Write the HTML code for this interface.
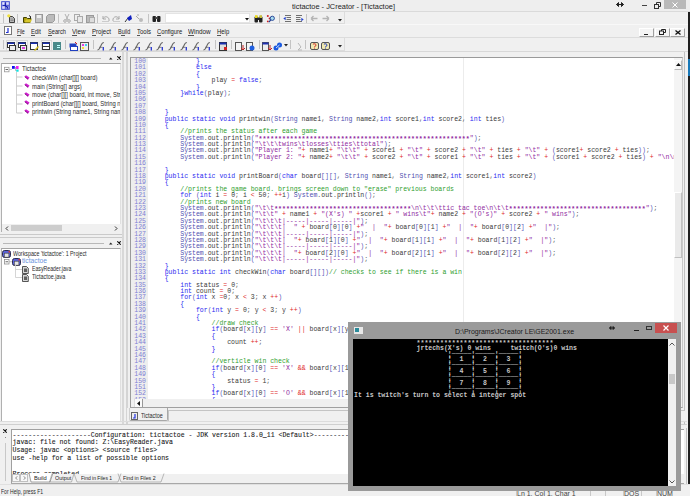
<!DOCTYPE html><html><head><meta charset="utf-8"><style>
*{margin:0;padding:0;box-sizing:border-box}
html,body{width:690px;height:496px;overflow:hidden;background:#f0f0f0}
body{position:relative;font-family:"Liberation Sans",sans-serif}
div,span,svg{position:absolute}
i{font-style:normal}
.ui{font-size:7.2px;color:#1a1a1a;white-space:nowrap;line-height:8px}
.code{font-family:"Liberation Mono",monospace;font-size:6.53px;line-height:6.386px;white-space:pre;color:#3a3a3a}
.sr{position:relative;top:1.3px;font-weight:bold}
.kw{color:#2a2af0}.cl{color:#5050b0}.st{color:#902aa0}.cm{color:#30a030}.op{color:#e02828}.br{color:#5858b8}.pu{color:#606060}
.ln{font-family:"Liberation Mono",monospace;font-size:6.53px;line-height:6.386px;white-space:pre;color:#7e7ed4;text-align:right}
.sep{width:1px;background:#c8c8c8}
.mono{font-family:"Liberation Mono",monospace;white-space:pre}
</style></head><body><div style="left:0px;top:0px;width:690px;height:11px;background:#eeeeee"></div><svg style="left:1px;top:1px" width="9" height="9" viewBox="0 0 9 9"><rect x="0" y="0" width="9" height="9" rx="0.8" fill="#5c66d4"/><rect x="1.2" y="1.2" width="2.6" height="2.6" fill="#e6e6ff"/><rect x="5.2" y="1.2" width="2.6" height="2.6" fill="#dcdcfa"/><rect x="1.2" y="5.2" width="2.6" height="2.6" fill="#dcdcfa"/><rect x="5.6" y="5.6" width="2" height="2" fill="#c8c8f0"/><path d="M4.3 1.5v2.8q0 1.2 1.2 1.2q1.2 0 1.3 2.2" stroke="#1018a8" stroke-width="1.1" fill="none"/><path d="M2 4.5h2.5" stroke="#1018a8" stroke-width="0.8"/></svg><div style="left:292.00px;top:2.52px;font-size:7.3px;line-height:7.3px;white-space:nowrap;color:#1e1e1e;transform:scaleX(1.0143);transform-origin:0 0;">tictactoe - JCreator - [Tictactoe]</div><svg style="left:616px;top:2px" width="8" height="5"><path d="M0.5 2.5h7M0.5 2.5l2-2v4zM7.5 2.5l-2-2v4z" stroke="#222" stroke-width="1" fill="#222"/></svg><div style="left:642px;top:5px;width:5px;height:1px;background:#444"></div><svg style="left:654px;top:2px" width="7" height="7"><path d="M2.5 2.5v-2h4v4h-2" stroke="#333" fill="none"/><rect x="0.5" y="2.5" width="4" height="4" fill="#eee" stroke="#333"/></svg><div style="left:664px;top:0px;width:22px;height:9px;background:#b9b9b9"></div><svg style="left:672px;top:2px" width="6" height="6"><path d="M0.5 0.5L5.5 5.5M5.5 0.5L0.5 5.5" stroke="#fff" stroke-width="1"/></svg><div style="left:0px;top:11px;width:690px;height:1px;background:#dadada"></div><div style="left:0px;top:12px;width:345px;height:12px;background:#f0f0f0"></div><div style="left:0px;top:23px;width:345px;height:1px;background:#dcdcdc"></div><div style="left:344px;top:12px;width:1px;height:12px;background:#dcdcdc"></div><div style="left:0px;top:24px;width:690px;height:1px;background:#f8f8f8"></div><div style="left:0px;top:37px;width:690px;height:1px;background:#dcdcdc"></div><div style="left:0px;top:50px;width:345px;height:1px;background:#dcdcdc"></div><div style="left:344px;top:38px;width:1px;height:12px;background:#dcdcdc"></div><div style="left:0px;top:51px;width:690px;height:1px;background:#d8d8d8"></div><div style="left:3px;top:14px;width:1px;height:9px;background:#c4c4c4"></div><div style="left:17px;top:14px;width:1px;height:9px;background:#c4c4c4"></div><div style="left:58px;top:14px;width:1px;height:9px;background:#c4c4c4"></div><div style="left:97px;top:14px;width:1px;height:9px;background:#c4c4c4"></div><div style="left:148px;top:14px;width:1px;height:9px;background:#c4c4c4"></div><div style="left:279px;top:14px;width:1px;height:9px;background:#c4c4c4"></div><div style="left:306px;top:14px;width:1px;height:9px;background:#c4c4c4"></div><div style="left:3px;top:40px;width:1px;height:9px;background:#c4c4c4"></div><div style="left:65px;top:40px;width:1px;height:9px;background:#c4c4c4"></div><div style="left:93px;top:40px;width:1px;height:9px;background:#c4c4c4"></div><div style="left:215px;top:40px;width:1px;height:9px;background:#c4c4c4"></div><div style="left:231px;top:40px;width:1px;height:9px;background:#c4c4c4"></div><div style="left:259px;top:40px;width:1px;height:9px;background:#c4c4c4"></div><div style="left:290px;top:40px;width:1px;height:9px;background:#c4c4c4"></div><div style="left:305px;top:40px;width:1px;height:9px;background:#c4c4c4"></div><div style="left:688px;top:12px;width:2px;height:474px;background:#1e1e1e"></div><div style="left:688px;top:59px;width:2px;height:17px;background:#1878b8"></div><svg style="left:4px;top:26px" width="8" height="9"><rect x="0.5" y="0.5" width="7" height="8" fill="#fff" stroke="#777"/><path d="M4 2v4.5h-2" stroke="#2030d0" stroke-width="1.2" fill="none"/></svg><div style="left:16.50px;top:27.67px;font-size:7.0px;line-height:7.0px;white-space:nowrap;color:#1a1a1a;transform:scaleX(0.6921);transform-origin:0 0;">File</div><div style="left:31.00px;top:27.67px;font-size:7.0px;line-height:7.0px;white-space:nowrap;color:#1a1a1a;transform:scaleX(0.8199);transform-origin:0 0;">Edit</div><div style="left:47.80px;top:27.67px;font-size:7.0px;line-height:7.0px;white-space:nowrap;color:#1a1a1a;transform:scaleX(0.8067);transform-origin:0 0;">Search</div><div style="left:72.20px;top:27.67px;font-size:7.0px;line-height:7.0px;white-space:nowrap;color:#1a1a1a;transform:scaleX(0.8904);transform-origin:0 0;">View</div><div style="left:91.80px;top:27.67px;font-size:7.0px;line-height:7.0px;white-space:nowrap;color:#1a1a1a;transform:scaleX(0.8728);transform-origin:0 0;">Project</div><div style="left:117.60px;top:27.67px;font-size:7.0px;line-height:7.0px;white-space:nowrap;color:#1a1a1a;transform:scaleX(0.7833);transform-origin:0 0;">Build</div><div style="left:136.70px;top:27.67px;font-size:7.0px;line-height:7.0px;white-space:nowrap;color:#1a1a1a;transform:scaleX(0.8565);transform-origin:0 0;">Tools</div><div style="left:156.70px;top:27.67px;font-size:7.0px;line-height:7.0px;white-space:nowrap;color:#1a1a1a;transform:scaleX(0.8337);transform-origin:0 0;">Configure</div><div style="left:188.40px;top:27.67px;font-size:7.0px;line-height:7.0px;white-space:nowrap;color:#1a1a1a;transform:scaleX(0.9069);transform-origin:0 0;">Window</div><div style="left:216.70px;top:27.67px;font-size:7.0px;line-height:7.0px;white-space:nowrap;color:#1a1a1a;transform:scaleX(0.8481);transform-origin:0 0;">Help</div><div style="left:16.5px;top:34.6px;width:4.0px;height:0.8px;background:#555"></div><div style="left:31px;top:34.6px;width:4px;height:0.8px;background:#555"></div><div style="left:47.8px;top:34.6px;width:4.0px;height:0.8px;background:#555"></div><div style="left:72.2px;top:34.6px;width:4.799999999999997px;height:0.8px;background:#555"></div><div style="left:91.8px;top:34.6px;width:4.0px;height:0.8px;background:#555"></div><div style="left:121px;top:34.6px;width:3.5px;height:0.8px;background:#555"></div><div style="left:136.7px;top:34.6px;width:3.8000000000000114px;height:0.8px;background:#555"></div><div style="left:156.7px;top:34.6px;width:4.0px;height:0.8px;background:#555"></div><div style="left:188.4px;top:34.6px;width:6.099999999999994px;height:0.8px;background:#555"></div><div style="left:216.7px;top:34.6px;width:4.0px;height:0.8px;background:#555"></div><div style="left:639px;top:28px;width:15px;height:9px;background:#f4f4f4;border-right:1px solid #a0a0a0;border-bottom:1px solid #a0a0a0;border-left:1px solid #fff;border-top:1px solid #fff"></div><div style="left:655px;top:28px;width:15px;height:9px;background:#f4f4f4;border-right:1px solid #a0a0a0;border-bottom:1px solid #a0a0a0;border-left:1px solid #fff;border-top:1px solid #fff"></div><div style="left:670px;top:28px;width:15px;height:9px;background:#f4f4f4;border-right:1px solid #a0a0a0;border-bottom:1px solid #a0a0a0;border-left:1px solid #fff;border-top:1px solid #fff"></div><div style="left:644px;top:34px;width:4px;height:1px;background:#222"></div><svg style="left:659px;top:29px" width="7" height="6"><path d="M2.5 2v-1.5h4v3h-2" stroke="#222" fill="none"/><rect x="0.5" y="2" width="4" height="3.5" fill="none" stroke="#222"/></svg><svg style="left:675px;top:30px" width="6" height="5"><path d="M0.5 0.5L5.5 4.5M5.5 0.5L0.5 4.5" stroke="#111" stroke-width="1.3"/></svg><svg style="left:7px;top:14px" width="9" height="9" viewBox="0 0 9 9"><path d="M2.5 2.5h3l2 2v4h-5z" fill="#b8b8b8" stroke="#404040"/><path d="M3.5 5h3M3.5 6.5h3" stroke="#707070" stroke-width="0.6"/><circle cx="1.8" cy="1.8" r="1.6" fill="#f0e040"/></svg><svg style="left:23px;top:14px" width="9" height="9" viewBox="0 0 9 9"><path d="M0.5 3.5h3l1 1h3.5l-1 4h-6.5z" fill="#b0a010" stroke="#404000"/><path d="M1.5 8.5l1.5-3h6l-1.5 3z" fill="#d8c830"/><path d="M6 1.5l2 1.5-1 1" stroke="#222" fill="none"/></svg><svg style="left:35px;top:14px" width="9" height="9" viewBox="0 0 9 9"><rect x="0.5" y="0.5" width="7" height="8" fill="#c4c4c4" stroke="#999"/><rect x="2" y="1" width="4" height="3" fill="#eee"/></svg><svg style="left:46px;top:14px" width="9" height="9" viewBox="0 0 9 9"><path d="M2.5 0.5h6v6l-2 2h-6v-6z" fill="#bbb" stroke="#999"/></svg><svg style="left:63px;top:14px" width="9" height="9" viewBox="0 0 9 9"><path d="M2 0l3 6M6 0l-3 6" stroke="#b0b0b0"/><circle cx="2" cy="7" r="1.3" fill="none" stroke="#aaa"/><circle cx="6" cy="7" r="1.3" fill="none" stroke="#aaa"/></svg><svg style="left:74px;top:14px" width="9" height="9" viewBox="0 0 9 9"><rect x="0.5" y="0.5" width="5" height="6" fill="#eee" stroke="#aaa"/><rect x="3.5" y="2.5" width="5" height="6" fill="#e8e8e8" stroke="#aaa"/></svg><svg style="left:86px;top:14px" width="9" height="9" viewBox="0 0 9 9"><rect x="0.5" y="1.5" width="7" height="7" fill="#bbb" stroke="#999"/><rect x="3.5" y="3.5" width="5" height="5" fill="#ddd" stroke="#aaa"/></svg><svg style="left:101px;top:14px" width="9" height="9" viewBox="0 0 9 9"><path d="M2 2v3h3M2 5c1-3 5-3 6 0v2" fill="none" stroke="#aaa"/><rect x="1" y="7" width="7" height="1" fill="#ccc"/></svg><svg style="left:112px;top:14px" width="9" height="9" viewBox="0 0 9 9"><path d="M7 2v3h-3M7 5c-1-3-5-3-6 0v2" fill="none" stroke="#aaa"/><rect x="1" y="7" width="7" height="1" fill="#ccc"/></svg><svg style="left:124px;top:14px" width="9" height="9" viewBox="0 0 9 9"><path d="M1 8l3-4" stroke="#333"/><path d="M3 4l4-3 1 4-3 2z" fill="#1020c0"/></svg><svg style="left:135px;top:14px" width="9" height="9" viewBox="0 0 9 9"><path d="M1 2l3 3" stroke="#aaa"/><circle cx="6" cy="6" r="2" fill="#bbb"/><path d="M2 1h2" stroke="#aaa"/></svg><svg style="left:152px;top:14px" width="9" height="9" viewBox="0 0 9 9"><rect x="0.5" y="2" width="3.5" height="6" rx="1" fill="#222"/><rect x="5" y="2" width="3.5" height="6" rx="1" fill="#222"/><rect x="3" y="3" width="3" height="2" fill="#444"/></svg><div style="left:165px;top:13px;width:85px;height:10px;background:#fff;border:1px solid #e4e4e4"></div><svg style="left:245px;top:17.5px" width="4" height="3"><path d="M0 0h4l-2 2.5z" fill="#111"/></svg><svg style="left:254px;top:14px" width="9" height="9" viewBox="0 0 9 9"><rect x="0.5" y="2.5" width="3.5" height="6" rx="1" fill="#202020"/><rect x="5" y="2.5" width="3.5" height="6" rx="1" fill="#202020"/><rect x="3" y="3.5" width="3" height="2.5" fill="#202020"/><rect x="1" y="1.2" width="2.6" height="2.8" fill="#e8d820"/><rect x="5.4" y="1.2" width="2.6" height="2.8" fill="#c8c040"/></svg><svg style="left:266px;top:14px" width="10" height="9" viewBox="0 0 10 9"><circle cx="1.8" cy="2" r="1" fill="#d02020"/><circle cx="3.6" cy="4.6" r="1" fill="#d02020"/><circle cx="1.8" cy="7.4" r="0.9" fill="#d02020"/><circle cx="6.3" cy="4.3" r="2.1" fill="#a8dcf0" stroke="#1a3a90" stroke-width="0.9"/><path d="M4.8 5.8l-2 2.4" stroke="#1a3a90" stroke-width="1.1"/></svg><svg style="left:283px;top:14px" width="9" height="9" viewBox="0 0 9 9"><path d="M2 1.5h6M3.5 3.5h4.5M3.5 5.5h4.5M2 7.5h6" stroke="#707070" stroke-width="1"/><path d="M0.3 4.5l2.4-1.8v3.6z" fill="#2040d0"/></svg><svg style="left:295px;top:14px" width="9" height="9" viewBox="0 0 9 9"><path d="M1 1.5h6M1 3.5h4.5M1 5.5h4.5M1 7.5h6" stroke="#707070" stroke-width="1"/><path d="M8.7 5.5l-2.4-1.8v3.6z" fill="#2040d0"/></svg><svg style="left:310px;top:14px" width="9" height="9" viewBox="0 0 9 9"><path d="M1 4.5h6.5M1 4.5l2.5-2.5M1 4.5l2.5 2.5" stroke="#b4b4b4" stroke-width="1.3" fill="none"/></svg><svg style="left:321px;top:14px" width="9" height="9" viewBox="0 0 9 9"><path d="M8 4.5h-6.5M8 4.5l-2.5-2.5M8 4.5l-2.5 2.5" stroke="#b4b4b4" stroke-width="1.3" fill="none"/></svg><svg style="left:338px;top:19px" width="4" height="3"><path d="M0 0h4l-2 2.5z" fill="#222"/></svg><div style="left:5.5px;top:39.5px;width:11px;height:11px;background:#f6f6f6;border:1px solid #d8d8d8"></div><div style="left:17px;top:39.5px;width:11px;height:11px;background:#f6f6f6;border:1px solid #d8d8d8"></div><svg style="left:7px;top:42px" width="10" height="9" viewBox="0 0 10 9"><rect x="0.5" y="0.5" width="7" height="5" fill="#fff" stroke="#333"/><rect x="0.5" y="0.5" width="7" height="1.5" fill="#1a30b0"/><rect x="2.5" y="3.5" width="6" height="5" fill="#eee" stroke="#333"/></svg><svg style="left:18px;top:42px" width="10" height="9" viewBox="0 0 10 9"><rect x="0.5" y="0.5" width="7" height="5" fill="#fff" stroke="#333"/><rect x="0.5" y="0.5" width="7" height="1.5" fill="#1a30b0"/><rect x="2.5" y="3.5" width="6" height="5" fill="#eee" stroke="#333"/><rect x="4" y="5" width="3" height="2" fill="#e040e0"/></svg><svg style="left:30px;top:42px" width="10" height="9" viewBox="0 0 10 9"><rect x="0.5" y="0.5" width="7" height="7" fill="#fff" stroke="#333"/><rect x="0.5" y="0.5" width="7" height="1.5" fill="#1a30b0"/><path d="M4 8l4-4 1 1-4 4z" fill="#d8c020"/></svg><div style="left:40.5px;top:39.5px;width:11px;height:11px;background:#f6f6f6;border:1px solid #d8d8d8"></div><svg style="left:42px;top:42px" width="9" height="9" viewBox="0 0 9 9"><rect x="0.5" y="0.5" width="7" height="7" fill="#fff" stroke="#333"/><rect x="0.5" y="0.5" width="7" height="1.5" fill="#1a30b0"/><path d="M0.5 4.5h7" stroke="#333"/></svg><svg style="left:53px;top:42px" width="9" height="9" viewBox="0 0 9 9"><rect x="0" y="0" width="8" height="8" fill="#4a8a8a"/><rect x="4" y="3" width="3" height="1" fill="#bff"/><rect x="4" y="5" width="3" height="1" fill="#bff"/></svg><svg style="left:69px;top:42px" width="9" height="9" viewBox="0 0 9 9"><rect x="0.5" y="1.5" width="7" height="4" fill="#2040c0"/><rect x="1.5" y="4.5" width="7" height="4" fill="#fff" stroke="#2040c0"/><path d="M6 0l2 2" stroke="#d02020"/></svg><svg style="left:80px;top:42px" width="9" height="9" viewBox="0 0 9 9"><rect x="0.5" y="0.5" width="8" height="8" fill="#eee" stroke="#555"/><rect x="2" y="2" width="2" height="2" fill="#e040e0"/><rect x="5" y="2" width="2" height="2" fill="#40d0f0"/><rect x="2" y="5" width="2" height="2" fill="#f0e040"/></svg><svg style="left:97px;top:42px" width="9" height="9" viewBox="0 0 9 9"><path d="M0.5 8q1.5-0.3 2.3-2l1.8-3.8q0.7-1.5 2.2-1.7" stroke="#666" stroke-width="1.1" fill="none"/><path d="M2 5.3h3.6" stroke="#666" stroke-width="0.8"/><path d="M6.3 5v3.5" stroke="#2535d0" stroke-width="1.3"/></svg><svg style="left:109px;top:42px" width="9" height="9" viewBox="0 0 9 9"><path d="M0.5 8q1.5-0.3 2.3-2l1.8-3.8q0.7-1.5 2.2-1.7" stroke="#666" stroke-width="1.1" fill="none"/><path d="M2 5.3h3.6" stroke="#666" stroke-width="0.8"/><path d="M6.3 5v3.5" stroke="#2535d0" stroke-width="1.3"/></svg><svg style="left:121px;top:42px" width="9" height="9" viewBox="0 0 9 9"><path d="M0.5 8q1.5-0.3 2.3-2l1.8-3.8q0.7-1.5 2.2-1.7" stroke="#666" stroke-width="1.1" fill="none"/><path d="M2 5.3h3.6" stroke="#666" stroke-width="0.8"/><path d="M6.3 5v3.5" stroke="#2535d0" stroke-width="1.3"/></svg><svg style="left:133px;top:42px" width="9" height="9" viewBox="0 0 9 9"><path d="M0.5 8q1.5-0.3 2.3-2l1.8-3.8q0.7-1.5 2.2-1.7" stroke="#666" stroke-width="1.1" fill="none"/><path d="M2 5.3h3.6" stroke="#666" stroke-width="0.8"/><path d="M6.3 5v3.5" stroke="#2535d0" stroke-width="1.3"/></svg><svg style="left:145px;top:42px" width="9" height="9" viewBox="0 0 9 9"><path d="M0.5 8q1.5-0.3 2.3-2l1.8-3.8q0.7-1.5 2.2-1.7" stroke="#666" stroke-width="1.1" fill="none"/><path d="M2 5.3h3.6" stroke="#666" stroke-width="0.8"/><path d="M6.3 5v3.5" stroke="#2535d0" stroke-width="1.3"/></svg><svg style="left:156px;top:42px" width="9" height="9" viewBox="0 0 9 9"><path d="M0.5 8q1.5-0.3 2.3-2l1.8-3.8q0.7-1.5 2.2-1.7" stroke="#666" stroke-width="1.1" fill="none"/><path d="M2 5.3h3.6" stroke="#666" stroke-width="0.8"/><path d="M6.3 5v3.5" stroke="#2535d0" stroke-width="1.3"/></svg><svg style="left:168px;top:42px" width="9" height="9" viewBox="0 0 9 9"><path d="M0.5 8q1.5-0.3 2.3-2l1.8-3.8q0.7-1.5 2.2-1.7" stroke="#666" stroke-width="1.1" fill="none"/><path d="M2 5.3h3.6" stroke="#666" stroke-width="0.8"/><path d="M6.3 5v3.5" stroke="#2535d0" stroke-width="1.3"/></svg><svg style="left:180px;top:42px" width="9" height="9" viewBox="0 0 9 9"><path d="M0.5 8q1.5-0.3 2.3-2l1.8-3.8q0.7-1.5 2.2-1.7" stroke="#666" stroke-width="1.1" fill="none"/><path d="M2 5.3h3.6" stroke="#666" stroke-width="0.8"/><path d="M6.3 5v3.5" stroke="#2535d0" stroke-width="1.3"/></svg><svg style="left:192px;top:42px" width="9" height="9" viewBox="0 0 9 9"><path d="M0.5 8q1.5-0.3 2.3-2l1.8-3.8q0.7-1.5 2.2-1.7" stroke="#666" stroke-width="1.1" fill="none"/><path d="M2 5.3h3.6" stroke="#666" stroke-width="0.8"/><path d="M6.3 5v3.5" stroke="#2535d0" stroke-width="1.3"/></svg><svg style="left:203px;top:42px" width="9" height="9" viewBox="0 0 9 9"><path d="M0.5 8q1.5-0.3 2.3-2l1.8-3.8q0.7-1.5 2.2-1.7" stroke="#666" stroke-width="1.1" fill="none"/><path d="M2 5.3h3.6" stroke="#666" stroke-width="0.8"/><path d="M6.3 5v3.5" stroke="#2535d0" stroke-width="1.3"/></svg><svg style="left:219px;top:42px" width="9" height="9" viewBox="0 0 9 9"><rect x="0.5" y="0.5" width="7" height="8" fill="#ddd" stroke="#333"/><rect x="0.5" y="0.5" width="7" height="2" fill="#1a30b0"/><rect x="5" y="5" width="3" height="3" fill="#d02020"/></svg><svg style="left:235px;top:42px" width="10" height="9" viewBox="0 0 10 9"><rect x="0.5" y="0.5" width="6" height="8" fill="#f4f4f4" stroke="#555"/><path d="M8 3v5M6 6l2 2 2-2" stroke="#c02020" fill="none"/></svg><svg style="left:246px;top:42px" width="10" height="9" viewBox="0 0 10 9"><rect x="0.5" y="0.5" width="6" height="8" fill="#f4f4f4" stroke="#555"/><circle cx="6" cy="6" r="2.5" fill="#2060e0"/></svg><svg style="left:262px;top:42px" width="10" height="9" viewBox="0 0 10 9"><rect x="0.5" y="0.5" width="6" height="8" fill="#eee" stroke="#555"/><rect x="0.5" y="0.5" width="6" height="2" fill="#2030b0"/><path d="M8 3v5M6 6l2 2 2-2" stroke="#c02020" fill="none"/></svg><svg style="left:273px;top:42px" width="10" height="9" viewBox="0 0 10 9"><circle cx="3" cy="6" r="2.5" fill="#1a5ae0"/><circle cx="6.5" cy="3" r="2.5" fill="#1a5ae0"/><path d="M3 6l3.5-3" stroke="#fff" stroke-width="0.8"/></svg><svg style="left:284px;top:44px" width="4" height="3"><path d="M0 0h4l-2 2.5z" fill="#222"/></svg><svg style="left:295px;top:42px" width="9" height="9" viewBox="0 0 9 9"><path d="M3 1l3 4-3 3h4" stroke="#b8b8b8" fill="none"/></svg><svg style="left:310px;top:42px" width="9" height="9" viewBox="0 0 9 9"><rect x="0.5" y="0.5" width="8" height="7" rx="1.5" fill="#f0e8b0" stroke="#555"/><path d="M3 2.5c0-1 3-1 3 0.5s-1.5 1-1.5 2" stroke="#d02020" fill="none"/><circle cx="4.5" cy="6" r="0.6" fill="#d02020"/></svg><svg style="left:321px;top:42px" width="9" height="9" viewBox="0 0 9 9"><rect x="0.5" y="0.5" width="8" height="7" rx="1.5" fill="#f0e8b0" stroke="#555"/><path d="M3 2.5c0-1 3-1 3 0.5s-1.5 1-1.5 2" stroke="#1030c0" fill="none"/><circle cx="4.5" cy="6" r="0.6" fill="#1030c0"/></svg><svg style="left:338px;top:45px" width="4" height="3"><path d="M0 0h4l-2 2.5z" fill="#222"/></svg><div style="left:3px;top:58px;width:98px;height:1px;background:#b8b8b8"></div><svg style="left:108.5px;top:56.5px" width="4" height="3"><path d="M0 2.5h3.5l-1.75-2z" fill="#222"/></svg><svg style="left:116.5px;top:55.5px" width="4" height="4"><path d="M0.3 0.3L3.7 3.7M3.7 0.3L0.3 3.7" stroke="#111" stroke-width="1.1"/></svg><div style="left:1px;top:63px;width:120px;height:170px;background:#fff;border-top:1.5px solid #a4a4a4;border-left:1px solid #b0b0b0;border-right:1px solid #e0e0e0"></div><div style="left:2px;top:224px;width:119px;height:8px;background:#f0f0f0"></div><div style="left:11px;top:225px;width:51px;height:6px;background:#cdcdcd"></div><svg style="left:5px;top:225.5px" width="4" height="5"><path d="M3 0.5l-2 2 2 2" stroke="#333" fill="none" stroke-width="1"/></svg><svg style="left:114px;top:225.5px" width="4" height="5"><path d="M1 0.5l2 2-2 2" stroke="#333" fill="none" stroke-width="1"/></svg><svg style="left:3px;top:66px" width="20" height="48"><rect x="1.5" y="1.3" width="4.5" height="4.5" fill="#fff" stroke="#999" stroke-width="0.8"/><path d="M2.5 3.5h2.5" stroke="#444" stroke-width="0.8"/><path d="M6 3.5h3" stroke="#b0b0b0" stroke-width="0.7"/><path d="M13.5 6v41" stroke="#d0d0d0"/><path d="M13.5 11h6M13.5 20h6M13.5 29h6M13.5 38h6M13.5 47h6" stroke="#c8c8c8"/></svg><svg style="left:12px;top:66px" width="8" height="8"><rect x="0" y="0" width="2.8" height="2.8" fill="#1010f0"/><rect x="4" y="0" width="2.6" height="3" fill="#f020f0"/><rect x="4.2" y="3.5" width="2.4" height="2.2" fill="#10e0e0"/><path d="M2.8 1.5h1.2M3.5 1.5v3h0.7" stroke="#909090" stroke-width="0.6" fill="none"/></svg><div style="left:22.00px;top:65.96px;font-size:6.9px;line-height:6.9px;white-space:nowrap;color:#2a2a2a;transform:scaleX(0.8652);transform-origin:0 0;">Tictactoe</div><div style="left:0;top:64px;width:120px;height:60px;overflow:hidden"><svg style="left:24px;top:10.6px" width="6" height="5"><path d="M0.5 1.5l1.5-1.2 3.5 2.2-1.5 2.2z" fill="#d020d0"/><path d="M0.8 1.8l3.2 2.5" stroke="#700070" stroke-width="0.8"/></svg><div style="left:31.50px;top:11.26px;font-size:6.9px;line-height:6.9px;white-space:nowrap;color:#2a2a2a;transform:scaleX(0.85);transform-origin:0 0">checkWin (char[][] board)</div><svg style="left:24px;top:19.1px" width="6" height="5"><path d="M0.5 1.5l1.5-1.2 3.5 2.2-1.5 2.2z" fill="#d020d0"/><path d="M0.8 1.8l3.2 2.5" stroke="#700070" stroke-width="0.8"/></svg><div style="left:31.50px;top:19.76px;font-size:6.9px;line-height:6.9px;white-space:nowrap;color:#2a2a2a;transform:scaleX(0.85);transform-origin:0 0">main (String[] args)</div><svg style="left:24px;top:27.6px" width="6" height="5"><path d="M0.5 1.5l1.5-1.2 3.5 2.2-1.5 2.2z" fill="#d020d0"/><path d="M0.8 1.8l3.2 2.5" stroke="#700070" stroke-width="0.8"/></svg><div style="left:31.50px;top:28.26px;font-size:6.9px;line-height:6.9px;white-space:nowrap;color:#2a2a2a;transform:scaleX(0.85);transform-origin:0 0">move (char[][] board, int move, String name)</div><svg style="left:24px;top:36.1px" width="6" height="5"><path d="M0.5 1.5l1.5-1.2 3.5 2.2-1.5 2.2z" fill="#d020d0"/><path d="M0.8 1.8l3.2 2.5" stroke="#700070" stroke-width="0.8"/></svg><div style="left:31.50px;top:36.76px;font-size:6.9px;line-height:6.9px;white-space:nowrap;color:#2a2a2a;transform:scaleX(0.85);transform-origin:0 0">printBoard (char[][] board, String name1, String name2)</div><svg style="left:24px;top:44.6px" width="6" height="5"><path d="M0.5 1.5l1.5-1.2 3.5 2.2-1.5 2.2z" fill="#d020d0"/><path d="M0.8 1.8l3.2 2.5" stroke="#700070" stroke-width="0.8"/></svg><div style="left:31.50px;top:45.26px;font-size:6.9px;line-height:6.9px;white-space:nowrap;color:#2a2a2a;transform:scaleX(0.85);transform-origin:0 0">printwin (String name1, String name2)</div></div><div style="left:1px;top:232px;width:121px;height:5px;background:#f0f0f0"></div><div style="left:0px;top:234px;width:122px;height:1px;background:#cacaca"></div><div style="left:0px;top:237px;width:122px;height:1px;background:#cacaca"></div><div style="left:3px;top:243px;width:101px;height:1px;background:#b8b8b8"></div><svg style="left:108.5px;top:241.5px" width="4" height="3"><path d="M0 2.5h3.5l-1.75-2z" fill="#222"/></svg><svg style="left:116.5px;top:241px" width="4" height="4"><path d="M0.3 0.3L3.7 3.7M3.7 0.3L0.3 3.7" stroke="#111" stroke-width="1.1"/></svg><div style="left:1px;top:248px;width:120px;height:173px;background:#fff;border-top:1.5px solid #a4a4a4;border-left:1px solid #b0b0b0;border-right:1px solid #e0e0e0"></div><svg style="left:1.5px;top:249.5px" width="9" height="8"><path d="M0.5 2.5q0-2 2-2h4q2 0 2 2v3q0 2-2 2h-4q-2 0-2-2z" fill="#5a64d8" stroke="#1e1e40" stroke-width="0.9"/><rect x="2.3" y="3.2" width="4.6" height="4" fill="#e4e4e4" stroke="#444" stroke-width="0.6"/><rect x="6.5" y="1" width="1.5" height="1.5" fill="#d03030"/></svg><div style="left:13.00px;top:250.56px;font-size:6.9px;line-height:6.9px;white-space:nowrap;color:#2a2a2a;transform:scaleX(0.7701);transform-origin:0 0;">Workspace 'tictactoe': 1 Project</div><svg style="left:3.5px;top:259px" width="8" height="6"><rect x="0.5" y="0.5" width="4.5" height="4.5" fill="#fff" stroke="#909090" stroke-width="0.8"/><path d="M1.5 2.75h2.5" stroke="#444" stroke-width="0.8"/><path d="M5 2.75h3" stroke="#a0a0a0" stroke-width="0.6"/></svg><svg style="left:11.5px;top:257.5px" width="9" height="8"><path d="M0.5 2.5q0-2 2-2h4q2 0 2 2v3q0 2-2 2h-4q-2 0-2-2z" fill="#5a64d8" stroke="#1e1e40" stroke-width="0.9"/><rect x="2.3" y="3.2" width="4.6" height="4" fill="#e4e4e4" stroke="#444" stroke-width="0.6"/><rect x="6.5" y="1" width="1.5" height="1.5" fill="#d03030"/></svg><div style="left:21.70px;top:258.26px;font-size:6.9px;line-height:6.9px;white-space:nowrap;color:#6a94dc;transform:scaleX(0.9727);transform-origin:0 0;">tictactoe</div><svg style="left:15px;top:265px" width="8" height="13"><path d="M0.5 0v12.5M0.5 4.5h7M0.5 12.5h7" stroke="#d0d0d0" stroke-width="0.9"/></svg><svg style="left:22px;top:265.5px" width="7" height="8"><path d="M0.5 0.5h4l1.8 1.8v5.2h-5.8z" fill="#d8d8d8" stroke="#303030" stroke-width="0.8"/><rect x="2" y="2.5" width="3" height="3.5" fill="#606060"/></svg><div style="left:31.60px;top:266.06px;font-size:6.9px;line-height:6.9px;white-space:nowrap;color:#2a2a2a;transform:scaleX(0.7548);transform-origin:0 0;">EasyReader.java</div><svg style="left:22px;top:273.5px" width="7" height="8"><path d="M0.5 0.5h4l1.8 1.8v5.2h-5.8z" fill="#d8d8d8" stroke="#303030" stroke-width="0.8"/><rect x="2" y="2.5" width="3" height="3.5" fill="#606060"/></svg><div style="left:31.60px;top:273.76px;font-size:6.9px;line-height:6.9px;white-space:nowrap;color:#2a2a2a;transform:scaleX(0.7866);transform-origin:0 0;">Tictactoe.java</div><div style="left:122px;top:52px;width:2px;height:372px;background:#d8d8d8"></div><div style="left:125.5px;top:52px;width:2px;height:372px;background:#d4d4d4"></div><div style="left:128px;top:52px;width:559px;height:372px;background:#f0f0f0"></div><div style="left:130px;top:57px;width:553px;height:351px;background:#fff;border-top:1.5px solid #9a9a9a;border-left:1.5px solid #9a9a9a;border-right:1px solid #c8c8c8;border-bottom:1px solid #a0a0a0"></div><div style="left:131px;top:58px;width:17px;height:341px;background:#eeeeee"></div><div style="left:463px;top:58px;width:1px;height:341px;background:#ececec"></div><div style="left:131px;top:58px;width:543px;height:341px;overflow:hidden"><div class="ln" style="left:0px;top:1.0px;width:15px">100
101
102
103
104
105
106
107
108
109
110
111
112
113
114
115
116
117
118
119
120
121
122
123
124
125
126
127
128
129
130
131
132
133
134
135
136
137
138
139
140
141
142
143
144
145
146
147
148
149
150
151
152
153</div><div class="code" style="left:18px;top:1.0px">            <i class="kw">}</i>
            <i class="kw">else</i>
            <i class="kw">{</i>
                play <i class="op">=</i> <i class="kw">false</i><i class="pu">;</i>
            <i class="kw">}</i>
        <i class="kw">}</i><i class="kw">while</i><i class="br">(</i>play<i class="br">)</i><i class="pu">;</i>


    <i class="kw">}</i>
    <i class="kw">public</i> <i class="kw">static</i> <i class="kw">void</i> printwin<i class="br">(</i><i class="cl">String</i> name1<i class="pu">,</i> <i class="cl">String</i> name2<i class="pu">,</i><i class="kw">int</i> score1<i class="pu">,</i><i class="kw">int</i> score2<i class="pu">,</i> <i class="kw">int</i> ties<i class="br">)</i>
    <i class="kw">{</i>
        <i class="cm">//prints the status after each game</i>
        <i class="cl">System</i><i class="pu">.</i>out<i class="pu">.</i>println<i class="br">(</i><i class="st">"<i class="sr">******************************************************</i>"</i><i class="br">)</i><i class="pu">;</i>
        <i class="cl">System</i><i class="pu">.</i>out<i class="pu">.</i>println<i class="br">(</i><i class="st">"\t\t\twins\tlosses\tties\ttotal"</i><i class="br">)</i><i class="pu">;</i>
        <i class="cl">System</i><i class="pu">.</i>out<i class="pu">.</i>println<i class="br">(</i><i class="st">"Player 1: "</i><i class="op">+</i> name1<i class="op">+</i> <i class="st">"\t\t"</i> <i class="op">+</i> score1 <i class="op">+</i> <i class="st">"\t"</i> <i class="op">+</i> score2 <i class="op">+</i> <i class="st">"\t"</i> <i class="op">+</i> ties <i class="op">+</i> <i class="st">"\t"</i> <i class="op">+</i> <i class="br">(</i>score1<i class="op">+</i> score2 <i class="op">+</i> ties<i class="br">)</i><i class="br">)</i><i class="pu">;</i>
        <i class="cl">System</i><i class="pu">.</i>out<i class="pu">.</i>println<i class="br">(</i><i class="st">"Player 2: "</i><i class="op">+</i> name2<i class="op">+</i> <i class="st">"\t\t"</i> <i class="op">+</i> score2 <i class="op">+</i> <i class="st">"\t"</i> <i class="op">+</i> score1 <i class="op">+</i> <i class="st">"\t"</i> <i class="op">+</i> ties <i class="op">+</i> <i class="st">"\t"</i> <i class="op">+</i> <i class="br">(</i>score1 <i class="op">+</i> score2 <i class="op">+</i> ties<i class="br">)</i> <i class="op">+</i> <i class="st">"\n\n"</i><i class="br">)</i><i class="pu">;</i>

    <i class="kw">}</i>
    <i class="kw">public</i> <i class="kw">static</i> <i class="kw">void</i> printBoard<i class="br">(</i><i class="kw">char</i> board<i class="br">[</i><i class="br">]</i><i class="br">[</i><i class="br">]</i><i class="pu">,</i> <i class="cl">String</i> name1<i class="pu">,</i> <i class="cl">String</i> name2<i class="pu">,</i><i class="kw">int</i> score1<i class="pu">,</i><i class="kw">int</i> score2<i class="br">)</i>
    <i class="kw">{</i>
        <i class="cm">//prints the game board. brings screen down to "erase" previous boards</i>
        <i class="kw">for</i> <i class="br">(</i><i class="kw">int</i> i <i class="op">=</i> 0<i class="pu">;</i> i <i class="op">&lt;</i> 50<i class="pu">;</i> <i class="op">++</i>i<i class="br">)</i> <i class="cl">System</i><i class="pu">.</i>out<i class="pu">.</i>println<i class="br">(</i><i class="br">)</i><i class="pu">;</i>
        <i class="cm">//prints new board</i>
        <i class="cl">System</i><i class="pu">.</i>out<i class="pu">.</i>println<i class="br">(</i><i class="st">"\t\t<i class="sr">***********************************</i>\n\t\t\ttic tac toe\n\t\t<i class="sr">***********************************</i>"</i><i class="br">)</i><i class="pu">;</i>
        <i class="cl">System</i><i class="pu">.</i>out<i class="pu">.</i>println<i class="br">(</i><i class="st">"\t\t"</i> <i class="op">+</i> name1 <i class="op">+</i> <i class="st">"(X's) "</i> <i class="op">+</i>score1 <i class="op">+</i> <i class="st">" wins\t"</i><i class="op">+</i> name2 <i class="op">+</i> <i class="st">"(O's)"</i> <i class="op">+</i> score2 <i class="op">+</i> <i class="st">" wins"</i><i class="br">)</i><i class="pu">;</i>
        <i class="cl">System</i><i class="pu">.</i>out<i class="pu">.</i>println<i class="br">(</i><i class="st">"\t\t\t|-----|-----|-----|"</i><i class="br">)</i><i class="pu">;</i>
        <i class="cl">System</i><i class="pu">.</i>out<i class="pu">.</i>println<i class="br">(</i><i class="st">"\t\t\t|  "</i> <i class="op">+</i> board<i class="br">[</i>0<i class="br">]</i><i class="br">[</i>0<i class="br">]</i> <i class="op">+</i><i class="st">"  |  "</i><i class="op">+</i> board<i class="br">[</i>0<i class="br">]</i><i class="br">[</i>1<i class="br">]</i> <i class="op">+</i><i class="st">"  |  "</i><i class="op">+</i> board<i class="br">[</i>0<i class="br">]</i><i class="br">[</i>2<i class="br">]</i> <i class="op">+</i><i class="st">"  |"</i><i class="br">)</i><i class="pu">;</i>
        <i class="cl">System</i><i class="pu">.</i>out<i class="pu">.</i>println<i class="br">(</i><i class="st">"\t\t\t|-----|-----|-----|"</i><i class="br">)</i><i class="pu">;</i>
        <i class="cl">System</i><i class="pu">.</i>out<i class="pu">.</i>println<i class="br">(</i><i class="st">"\t\t\t|  "</i><i class="op">+</i> board<i class="br">[</i>1<i class="br">]</i><i class="br">[</i>0<i class="br">]</i> <i class="op">+</i><i class="st">"  |  "</i><i class="op">+</i> board<i class="br">[</i>1<i class="br">]</i><i class="br">[</i>1<i class="br">]</i> <i class="op">+</i><i class="st">"  |  "</i><i class="op">+</i> board<i class="br">[</i>1<i class="br">]</i><i class="br">[</i>2<i class="br">]</i> <i class="op">+</i><i class="st">"  |"</i><i class="br">)</i><i class="pu">;</i>
        <i class="cl">System</i><i class="pu">.</i>out<i class="pu">.</i>println<i class="br">(</i><i class="st">"\t\t\t|-----|-----|-----|"</i><i class="br">)</i><i class="pu">;</i>
        <i class="cl">System</i><i class="pu">.</i>out<i class="pu">.</i>println<i class="br">(</i><i class="st">"\t\t\t|  "</i><i class="op">+</i> board<i class="br">[</i>2<i class="br">]</i><i class="br">[</i>0<i class="br">]</i> <i class="op">+</i><i class="st">"  |  "</i><i class="op">+</i> board<i class="br">[</i>2<i class="br">]</i><i class="br">[</i>1<i class="br">]</i> <i class="op">+</i><i class="st">"  |  "</i><i class="op">+</i> board<i class="br">[</i>2<i class="br">]</i><i class="br">[</i>2<i class="br">]</i> <i class="op">+</i><i class="st">"  |"</i><i class="br">)</i><i class="pu">;</i>
        <i class="cl">System</i><i class="pu">.</i>out<i class="pu">.</i>println<i class="br">(</i><i class="st">"\t\t\t|-----|-----|-----|"</i><i class="br">)</i><i class="pu">;</i>
    <i class="kw">}</i>
    <i class="kw">public</i> <i class="kw">static</i> <i class="kw">int</i> checkWin<i class="br">(</i><i class="kw">char</i> board<i class="br">[</i><i class="br">]</i><i class="br">[</i><i class="br">]</i><i class="br">)</i><i class="cm">// checks to see if there is a win</i>
    <i class="kw">{</i>
        <i class="kw">int</i> status <i class="op">=</i> 0<i class="pu">;</i>
        <i class="kw">int</i> count <i class="op">=</i> 0<i class="pu">;</i>
        <i class="kw">for</i><i class="br">(</i><i class="kw">int</i> x <i class="op">=</i>0<i class="pu">;</i> x <i class="op">&lt;</i> 3<i class="pu">;</i> x <i class="op">++</i><i class="br">)</i>
        <i class="kw">{</i>
            <i class="kw">for</i><i class="br">(</i><i class="kw">int</i> y <i class="op">=</i> 0<i class="pu">;</i> y <i class="op">&lt;</i> 3<i class="pu">;</i> y <i class="op">++</i><i class="br">)</i>
            <i class="kw">{</i>
                <i class="cm">//draw check</i>
                <i class="kw">if</i><i class="br">(</i>board<i class="br">[</i>x<i class="br">]</i><i class="br">[</i>y<i class="br">]</i> <i class="op">==</i> <i class="st">'X'</i> <i class="op">||</i> board<i class="br">[</i>x<i class="br">]</i><i class="br">[</i>y<i class="br">]</i> <i class="op">==</i> <i class="st">'O'</i><i class="br">)</i>
                <i class="kw">{</i>
                    count <i class="op">++</i><i class="pu">;</i>
                <i class="kw">}</i>

                <i class="cm">//verticle win check</i>
                <i class="kw">if</i><i class="br">(</i>board<i class="br">[</i>x<i class="br">]</i><i class="br">[</i>0<i class="br">]</i> <i class="op">==</i> <i class="st">'X'</i> <i class="op">&amp;&amp;</i> board<i class="br">[</i>x<i class="br">]</i><i class="br">[</i>1<i class="br">]</i> <i class="op">==</i> <i class="st">'X'</i> <i class="op">&amp;&amp;</i> board<i class="br">[</i>x<i class="br">]</i><i class="br">[</i>2<i class="br">]</i> <i class="op">==</i> <i class="st">'X'</i><i class="br">)</i>
                <i class="kw">{</i>
                    status <i class="op">=</i> 1<i class="pu">;</i>
                <i class="kw">}</i>
                <i class="kw">if</i><i class="br">(</i>board<i class="br">[</i>x<i class="br">]</i><i class="br">[</i>0<i class="br">]</i> <i class="op">==</i> <i class="st">'O'</i> <i class="op">&amp;&amp;</i> board<i class="br">[</i>x<i class="br">]</i><i class="br">[</i>1<i class="br">]</i> <i class="op">==</i> <i class="st">'O'</i> <i class="op">&amp;&amp;</i> board<i class="br">[</i>x<i class="br">]</i><i class="br">[</i>2<i class="br">]</i> <i class="op">==</i> <i class="st">'O'</i><i class="br">)</i>
                <i class="kw">{</i></div></div><div style="left:674px;top:58px;width:8px;height:341px;background:#f4f4f4"></div><div style="left:674px;top:60px;width:8px;height:10px;background:#f8f8f8;border:1px solid #bcbcbc;border-top-color:#fff;border-left-color:#fff"></div><svg style="left:675.5px;top:63px" width="5" height="3"><path d="M0 3h5l-2.5-3z" fill="#111"/></svg><div style="left:674px;top:192px;width:8px;height:66px;background:#eaeaea;border:1px solid #c0c0c0;border-top-color:#fff;border-left-color:#fff"></div><div style="left:131px;top:399px;width:551px;height:8px;background:#f0f0f0"></div><div style="left:134px;top:399px;width:9px;height:8px;background:#fafafa;border-right:1px solid #999;border-left:1px solid #ddd"></div><svg style="left:137px;top:401px" width="3" height="5"><path d="M3 0v5l-3-2.5z" fill="#111"/></svg><div style="left:684px;top:52px;width:1px;height:372px;background:#c0c0c0"></div><div style="left:127px;top:408px;width:557px;height:14px;background:#f0f0f0"></div><div style="left:167.5px;top:409.5px;width:517px;height:12px;background:#f0f0f0;border-left:1px solid #c4c4c4;border-top:1px solid #c4c4c4"></div><div style="left:129px;top:408px;width:39px;height:13px;background:#f0f0f0;border-left:1px solid #d0d0d0;border-right:1px solid #a8a8a8;border-bottom:1.5px solid #a8a8a8;border-radius:0 0 2px 2px"></div><svg style="left:131px;top:412px" width="7" height="8"><rect x="0.5" y="0.5" width="6" height="7" fill="#eee" stroke="#666"/><path d="M4 2v4h-2" stroke="#2030e0" stroke-width="1.2" fill="none"/></svg><div style="left:141.30px;top:412.96px;font-size:6.9px;line-height:6.9px;white-space:nowrap;color:#2a2a2a;transform:scaleX(0.7823);transform-origin:0 0;">Tictactoe</div><div style="left:0px;top:421px;width:687px;height:1px;background:#dcdcdc"></div><div style="left:0px;top:424px;width:687px;height:1px;background:#cfcfcf"></div><svg style="left:3px;top:428.5px" width="4" height="4"><path d="M0.3 0.3L3.7 3.7M3.7 0.3L0.3 3.7" stroke="#111" stroke-width="1.1"/></svg><div style="left:4.5px;top:437px;width:1px;height:1px;background:#888"></div><div style="left:5px;top:443px;width:1px;height:38px;background:#c8c8c8"></div><div style="left:11px;top:429px;width:673px;height:55px;background:#fff;border-top:1.5px solid #a0a0a0;border-left:1.5px solid #a0a0a0"></div><div style="left:11px;top:482.5px;width:673px;height:1.5px;background:#a8a8a8"></div><div style="left:12px;top:430px;width:670px;height:44px;overflow:hidden"><div class="mono" style="left:0.6px;top:1.5px;font-size:6.53px;line-height:7.86px;color:#1a1a1a;-webkit-text-stroke:0.1px #1a1a1a">--------------------Configuration: tictactoe - JDK version 1.8.0_11 &lt;Default&gt;--------------------
javac: file not found: Z:\EasyReader.java
Usage: javac &lt;options&gt; &lt;source files&gt;
use -help for a list of possible options

Process completed.</div></div><div style="left:12px;top:474px;width:672px;height:9px;background:#f0f0f0"></div><div style="left:12px;top:474px;width:8px;height:8px;background:#f8f8f8;border:1px solid #c0c0c0"></div><div style="left:20px;top:474px;width:8px;height:8px;background:#f8f8f8;border:1px solid #c0c0c0"></div><svg style="left:14.5px;top:476px" width="3" height="4"><path d="M2.5 0.3l-2 1.7 2 1.7" stroke="#777" stroke-width="0.8" fill="none"/></svg><svg style="left:22.5px;top:476px" width="3" height="4"><path d="M0.5 0.3l2 1.7-2 1.7" stroke="#777" stroke-width="0.8" fill="none"/></svg><svg style="left:28px;top:473px" width="140" height="10"><path d="M1 0l2 9h19l3-9" fill="#fff" stroke="#808080" stroke-width="0.7"/><path d="M24 0.5l-2.5 8.5h22l2.5-8.5" fill="none" stroke="#909090" stroke-width="0.6"/><path d="M46 0.5l3 8.5h41l3-8.5" fill="none" stroke="#909090" stroke-width="0.6"/><path d="M90 0.5l3 8.5h40l3-8.5" fill="none" stroke="#909090" stroke-width="0.6"/></svg><div style="left:34.00px;top:474.55px;font-size:6.2px;line-height:6.2px;white-space:nowrap;color:#1a1a1a;transform:scaleX(0.9279);transform-origin:0 0;">Build</div><div style="left:55.00px;top:474.55px;font-size:6.2px;line-height:6.2px;white-space:nowrap;color:#1a1a1a;transform:scaleX(0.8710);transform-origin:0 0;">Output</div><div style="left:80.90px;top:474.55px;font-size:6.2px;line-height:6.2px;white-space:nowrap;color:#1a1a1a;transform:scaleX(0.8058);transform-origin:0 0;">Find in Files 1</div><div style="left:122.90px;top:474.55px;font-size:6.2px;line-height:6.2px;white-space:nowrap;color:#1a1a1a;transform:scaleX(0.8447);transform-origin:0 0;">Find in Files 2</div><div style="left:686px;top:428px;width:1px;height:56px;background:#c0c0c0"></div><div style="left:0px;top:484px;width:690px;height:12px;background:#f0f0f0;border-top:1px solid #e0e0e0"></div><div style="left:0.90px;top:488.57px;font-size:6.3px;line-height:6.3px;white-space:nowrap;color:#2a2a2a;transform:scaleX(0.8071);transform-origin:0 0;">For Help, press F1</div><div style="left:516px;top:486px;width:1px;height:10px;background:#c8c8c8"></div><div style="left:590px;top:486px;width:1px;height:10px;background:#c8c8c8"></div><div style="left:605px;top:486px;width:1px;height:10px;background:#c8c8c8"></div><div style="left:623px;top:486px;width:1px;height:10px;background:#c8c8c8"></div><div style="left:641px;top:486px;width:1px;height:10px;background:#c8c8c8"></div><div style="left:656px;top:486px;width:1px;height:10px;background:#c8c8c8"></div><div style="left:668px;top:486px;width:1px;height:10px;background:#c8c8c8"></div><div class="ui" style="left:517px;top:490px;font-size:7px;color:#444">Ln 1, Col 1, Char 1</div><div class="ui" style="left:624px;top:490px;font-size:7px;color:#444">DOS</div><div class="ui" style="left:657px;top:490px;font-size:7px;color:#444">NUM</div><div style="left:348px;top:322px;width:333px;height:169px;background:#9a9a9a"></div><div style="left:353px;top:339px;width:315px;height:147px;background:#000"></div><svg style="left:354px;top:327px" width="9" height="7"><rect x="0" y="0" width="9" height="7" fill="#e8e8e8"/><rect x="1" y="1" width="4" height="4" fill="#2a8a9a"/></svg><div style="left:454.70px;top:328.20px;font-size:7.8px;line-height:7.8px;white-space:nowrap;color:#1a1a1a;transform:scaleX(0.8948);transform-origin:0 0;">D:\Programs\JCreator LE\GE2001.exe</div><svg style="left:608.5px;top:326px" width="6" height="4"><path d="M0.5 2h5M0.3 2l1.8-1.6v3.2zM5.7 2l-1.8-1.6v3.2z" stroke="#222" stroke-width="0.8" fill="#222"/></svg><div style="left:634px;top:329.5px;width:4.5px;height:1px;background:#222"></div><div style="left:645.5px;top:325.5px;width:6.5px;height:4.5px;border:1px solid #333;border-top-width:1.5px"></div><div style="left:655px;top:323px;width:22px;height:10px;background:#c85050"></div><svg style="left:663px;top:325px" width="6" height="6"><path d="M0.5 0.5L5.5 5.5M5.5 0.5L0.5 5.5" stroke="#fff" stroke-width="1.2"/></svg><div style="left:668px;top:339px;width:8px;height:147px;background:#f0f0f0"></div><svg style="left:669px;top:342px" width="6" height="4"><path d="M0.5 3.5l2.5-2.5 2.5 2.5" stroke="#555" fill="none"/></svg><svg style="left:669px;top:480px" width="6" height="4"><path d="M0.5 0.5l2.5 2.5 2.5-2.5" stroke="#555" fill="none"/></svg><div style="left:669px;top:373.5px;width:6px;height:10px;background:#c8c8c8"></div><div class="mono" style="left:354px;top:339.8px;font-size:6.53px;line-height:5.87px;color:#c8c8c8;font-weight:bold">                <i style="position:relative;top:1.6px">***********************************</i>
                jrtechs(X's) 0 wins     twitch(O's)0 wins
                        ¦─────¦─────¦─────¦
                        ¦  1  ¦  2  ¦  3  ¦
                        ¦─────¦─────¦─────¦
                        ¦  4  ¦  5  ¦  6  ¦
                        ¦─────¦─────¦─────¦
                        ¦  7  ¦  8  ¦  9  ¦
                        ¦─────¦─────¦─────¦
It is twitch's turn to select a integer spot</div></body></html>
